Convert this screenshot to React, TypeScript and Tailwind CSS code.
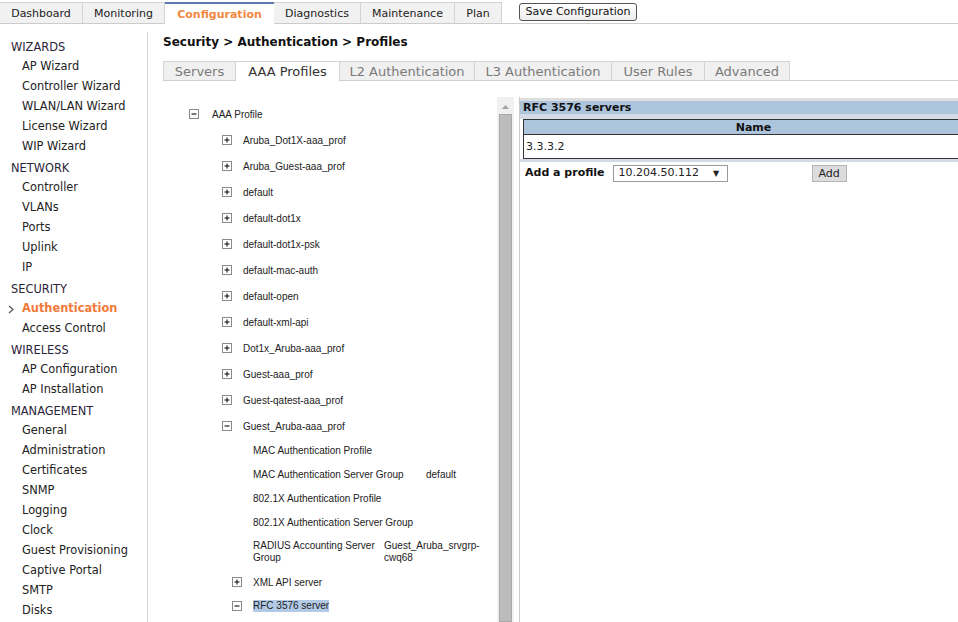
import React from "react";

const topTabs: { label: string; w: string; active?: boolean }[] = [
  { label: "Dashboard", w: "w-[83px]" },
  { label: "Monitoring", w: "w-[82px]" },
  { label: "Configuration", w: "w-[109px]", active: true },
  { label: "Diagnostics", w: "w-[87px]" },
  { label: "Maintenance", w: "w-[94px]" },
  { label: "Plan", w: "w-[47px]" },
];

const subTabs: { label: string; w: string; active?: boolean }[] = [
  { label: "Servers", w: "w-[73px]" },
  { label: "AAA Profiles", w: "w-[104px]", active: true },
  { label: "L2 Authentication", w: "w-[135px]" },
  { label: "L3 Authentication", w: "w-[137px]" },
  { label: "User Rules", w: "w-[93px]" },
  { label: "Advanced", w: "w-[85px]" },
];

const sections: { title: string; items: string[] }[] = [
  { title: "WIZARDS", items: ["AP Wizard", "Controller Wizard", "WLAN/LAN Wizard", "License Wizard", "WIP Wizard"] },
  { title: "NETWORK", items: ["Controller", "VLANs", "Ports", "Uplink", "IP"] },
  { title: "SECURITY", items: ["Authentication", "Access Control"] },
  { title: "WIRELESS", items: ["AP Configuration", "AP Installation"] },
  {
    title: "MANAGEMENT",
    items: ["General", "Administration", "Certificates", "SNMP", "Logging", "Clock", "Guest Provisioning", "Captive Portal", "SMTP", "Disks"],
  },
];

const profiles = [
  "Aruba_Dot1X-aaa_prof",
  "Aruba_Guest-aaa_prof",
  "default",
  "default-dot1x",
  "default-dot1x-psk",
  "default-mac-auth",
  "default-open",
  "default-xml-api",
  "Dot1x_Aruba-aaa_prof",
  "Guest-aaa_prof",
  "Guest-qatest-aaa_prof",
];

function Box({ plus }: { plus?: boolean }) {
  return (
    <svg width="10" height="10" viewBox="0 0 10 10" className="shrink-0">
      <rect x="0.5" y="0.5" width="9" height="9" fill="#fff" stroke="#8a8a8a" />
      <path d="M2.5 5h5" stroke="#222" strokeWidth="1.2" />
      {plus && <path d="M5 2.5v5" stroke="#222" strokeWidth="1.2" />}
    </svg>
  );
}

export default function App() {
  return (
    <div className="w-[958px] h-[622px] overflow-hidden bg-white text-[#222] font-['DejaVu_Sans',Verdana,sans-serif] flex flex-col">
      {/* top nav */}
      <div className="h-[24px] shrink-0 flex items-start pt-[2px] border-b border-[#cccccc]">
        {topTabs.map((t) =>
          t.active ? (
            <div
              key={t.label}
              className={`${t.w} h-[22px] pt-[2px] bg-white border-t-2 border-[#5b79ab] flex items-center justify-center text-[11px] font-bold text-[#f2883f] relative z-10`}
            >
              {t.label}
            </div>
          ) : (
            <div
              key={t.label}
              className={`${t.w} h-[21px] pt-[2px] bg-[#f1f1f1] border-t border-r border-[#d3d3d3] flex items-center justify-center text-[11px] text-[#222]`}
            >
              {t.label}
            </div>
          )
        )}
        <button className="ml-[17px] mt-[1px] w-[118px] h-[18px] rounded-[3px] border border-[#555] bg-gradient-to-b from-white to-[#ececec] text-[11px] text-[#111] leading-[16px]">
          Save Configuration
        </button>
      </div>

      <div className="flex flex-1 min-h-0">
        {/* sidebar */}
        <div className="w-[148px] shrink-0 border-r border-[#d4d4d4] mt-[8px] pt-[6px]">
          {sections.map((s, i) => (
            <div key={s.title} className={i > 0 ? "mt-[2px]" : ""}>
              <div className="h-[19px] pl-[11px] flex items-center text-[11.4px] text-[#2a2438]">{s.title}</div>
              {s.items.map((it) =>
                it === "Authentication" ? (
                  <div key={it} className="h-[20px] pl-[8px] flex items-center text-[11.4px] font-bold text-[#f27a3a]">
                    <svg width="14" height="9" viewBox="0 0 14 9" className="shrink-0">
                      <path d="M1 1l4 3.5L1 8" stroke="#555" strokeWidth="1.2" fill="none" />
                    </svg>
                    {it}
                  </div>
                ) : (
                  <div key={it} className="h-[20px] pl-[22px] flex items-center text-[11.4px] text-[#222]">
                    {it}
                  </div>
                )
              )}
            </div>
          ))}
        </div>

        {/* main */}
        <div className="flex-1 min-w-0 pl-[15px] pt-[11px] flex flex-col">
          <div className="h-[14px] leading-[14px] text-[12px] font-bold text-[#111]">Security &gt; Authentication &gt; Profiles</div>

          <div className="mt-[12px] flex border-b border-[#cfcfcf] h-[20px]">
            {subTabs.map((t, i) => (
              <div
                key={t.label}
                className={`${t.w} ${i === 0 ? "border-l" : ""} pt-[1px] border-t border-r border-[#d3d3d3] flex items-center justify-center text-[13px] ${
                  t.active ? "h-[20px] bg-white text-[#333] relative z-10" : "h-[19px] bg-[#f0f0f0] text-[#7a7a7a]"
                }`}
              >
                {t.label}
              </div>
            ))}
          </div>

          <div className="mt-[16px] flex flex-1 min-h-0">
            {/* tree */}
            <div className="w-[334px] shrink-0 pt-[4px] font-['Liberation_Sans',Arial,sans-serif] text-[10px] text-[#222]">
              <div className="h-[26px] flex items-center pl-[26px]">
                <Box />
                <span className="ml-[13px]">AAA Profile</span>
              </div>
              {profiles.map((p) => (
                <div key={p} className="h-[26px] flex items-center pl-[59px]">
                  <Box plus />
                  <span className="ml-[11px]">{p}</span>
                </div>
              ))}
              <div className="h-[26px] flex items-center pl-[59px]">
                <Box />
                <span className="ml-[11px]">Guest_Aruba-aaa_prof</span>
              </div>
              <div className="mt-[-1px] pl-[90px]">
                <div className="h-[24px] flex items-center">MAC Authentication Profile</div>
                <div className="h-[24px] flex items-center">
                  <span className="w-[173px] shrink-0">MAC Authentication Server Group</span>
                  <span>default</span>
                </div>
                <div className="h-[24px] flex items-center">802.1X Authentication Profile</div>
                <div className="h-[24px] flex items-center">802.1X Authentication Server Group</div>
                <div className="h-[36px] flex items-center leading-[12px]">
                  <span className="w-[131px] shrink-0">RADIUS Accounting Server Group</span>
                  <span className="w-[100px]">Guest_Aruba_srvgrp-cwq68</span>
                </div>
              </div>
              <div className="h-[24px] flex items-center pl-[69px]">
                <Box plus />
                <span className="ml-[11px]">XML API server</span>
              </div>
              <div className="h-[24px] flex items-center pl-[69px]">
                <Box />
                <span className="ml-[11px] bg-[#b3cae6] leading-[12px]">RFC 3576 server</span>
              </div>
            </div>

            {/* scrollbar */}
            <div className="w-[17px] shrink-0 bg-[#f0f0f0] flex flex-col items-center">
              <div className="h-[17px] w-full flex items-center justify-center pt-[2px]">
                <svg width="7" height="4" viewBox="0 0 7 4">
                  <path d="M0 4L3.5 0L7 4Z" fill="#a3a3a3" />
                </svg>
              </div>
              <div className="w-[13px] flex-1 bg-[#bcbcbc] border border-[#a9a9a9]" />
            </div>

            {/* right panel */}
            <div className="ml-[5px] flex-1 min-w-0 border-l border-[#c8c8c8] pt-[1px] overflow-hidden">
              <div className="h-[3px] bg-[#dedede]" />
              <div className="h-[13px] bg-[#adc4dd] pl-[3px] pt-[1px] text-[11px] font-bold leading-[12px] text-[#111]">RFC 3576 servers</div>
              <div className="h-[5px] bg-[#d3dbe6]" />
              <div className="ml-[3px] w-[460px] border-l border-t border-b border-[#333]">
                <div className="h-[15px] pt-[1px] bg-[#adc4dd] text-center text-[11px] font-bold leading-[13px] text-[#111] border-b border-[#333]">
                  Name
                </div>
                <div className="h-[23px] bg-white pl-[2px] pt-[2px] flex items-center text-[11px] text-[#222]">3.3.3.2</div>
              </div>
              <div className="h-[3px] bg-[#d3dbe6]" />
              <div className="mt-[3px] h-[17px] pl-[5px] flex items-center">
                <span className="text-[11px] font-bold text-[#111]">Add a profile</span>
                <div className="ml-[8px] w-[115px] h-[17px] border border-[#9a9a9a] bg-white flex items-center pl-[5px] text-[11px] text-[#222]">
                  <span>10.204.50.112</span>
                  <span className="ml-[14px] text-[8px]">▼</span>
                </div>
                <button className="ml-[84px] w-[35px] h-[17px] bg-[#dcdcdc] border border-[#b5b5b5] text-[11px] text-[#222] leading-[15px]">
                  Add
                </button>
              </div>
            </div>
          </div>
        </div>
      </div>
    </div>
  );
}
